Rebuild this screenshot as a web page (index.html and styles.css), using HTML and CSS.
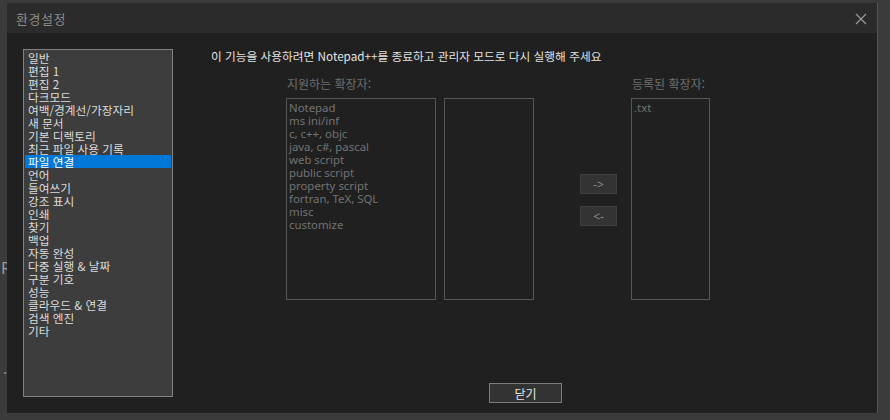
FILE: index.html
```html
<html lang="ko">
  <head>
    <meta charset="UTF-8" />
    <meta name="viewport" content="width=device-width, initial-scale=1.0" />
    <title>환경설정</title>

    <link rel="stylesheet" href="styles.css">
  </head>
  <body>
    <div class="gutter">
      <span class="ghost-r">R</span>
      <span class="ghost-dot">.</span>
    </div>

    <div class="dialog">
      <div class="titlebar">
        <span class="title">환경설정</span>
        <svg class="close" width="12" height="12" viewBox="0 0 12 12">
          <path d="M1 1 L11 11 M11 1 L1 11" stroke="#9a9a9a" stroke-width="1.2" fill="none" />
        </svg>
      </div>

      <div class="content">
        <ul class="nav">
          <li>일반</li>
          <li>편집 1</li>
          <li>편집 2</li>
          <li>다크모드</li>
          <li>여백/경계선/가장자리</li>
          <li>새 문서</li>
          <li>기본 디렉토리</li>
          <li>최근 파일 사용 기록</li>
          <li class="selected">파일 연결</li>
          <li>언어</li>
          <li>들여쓰기</li>
          <li>강조 표시</li>
          <li>인쇄</li>
          <li>찾기</li>
          <li>백업</li>
          <li>자동 완성</li>
          <li>다중 실행 &amp; 날짜</li>
          <li>구분 기호</li>
          <li>성능</li>
          <li>클라우드 &amp; 연결</li>
          <li>검색 엔진</li>
          <li>기타</li>
        </ul>

        <div class="panel">
          <p class="notice">이 기능을 사용하려면 Notepad++를 종료하고 관리자 모드로 다시 실행해 주세요</p>

          <div class="columns">
            <div class="col col-ext">
              <div class="label">지원하는 확장자:</div>
              <ul class="box">
                <li>Notepad</li>
                <li>ms ini/inf</li>
                <li>c, c++, objc</li>
                <li>java, c#, pascal</li>
                <li>web script</li>
                <li>public script</li>
                <li>property script</li>
                <li>fortran, TeX, SQL</li>
                <li>misc</li>
                <li>customize</li>
              </ul>
            </div>

            <div class="col col-sub">
              <div class="label"></div>
              <ul class="box"></ul>
            </div>

            <div class="col col-btns">
              <div class="btn small">-&gt;</div>
              <div class="btn small">&lt;-</div>
            </div>

            <div class="col col-reg">
              <div class="label">등록된 확장자:</div>
              <ul class="box">
                <li>.txt</li>
              </ul>
            </div>
          </div>

          <div class="btn close-btn">닫기</div>
        </div>
      </div>
    </div>
  </body>
</html>
```

FILE: styles.css
```css
*,
*::after,
*::before {
  margin: 0;
  padding: 0;
  box-sizing: border-box;
}

:root {
  --outer-bg: #3b3b3b;
  --title-bg: #2b2b2b;
  --dialog-bg: #202020;
  --list-bg: #3d3d3d;
  --text: #dcdcdc;
  --dim: #6e6e6e;

  --ui-font: "Noto Sans CJK KR", "Noto Sans", sans-serif;
  --latin-font: "Noto Sans", "Noto Sans CJK KR", sans-serif;
}

body {
  width: 890px;
  height: 420px;
  overflow: hidden;
  display: flex;
  padding-top: 3px;
  background: var(--outer-bg);
  font-family: var(--ui-font);
  font-size: 12px;
  color: var(--text);
}

ul {
  list-style: none;
}

.gutter {
  width: 7px;
  display: flex;
  flex-direction: column;
  align-items: flex-end;
  overflow: hidden;
  color: #9a9a9a;
  font-family: var(--latin-font);
}

.ghost-r {
  font-size: 16px;
  line-height: 16px;
  margin-top: 257px;
  margin-right: -4px;
}

.ghost-dot {
  font-size: 14px;
  line-height: 10px;
  margin-top: 88px;
}

.dialog {
  width: 871px;
  height: 410px;
  display: flex;
  flex-direction: column;
  background: var(--dialog-bg);
  border-right: 1px solid #555;
}

.titlebar {
  height: 30px;
  flex: none;
  display: flex;
  align-items: center;
  justify-content: space-between;
  padding: 0 10px 0 9px;
  background: var(--title-bg);
}

.title {
  color: #8a8a8a;
  font-size: 13px;
  letter-spacing: 0.5px;
}

.close {
  margin-top: 1px;
}

.content {
  flex: 1;
  display: flex;
  padding: 16px 0 0 16px;
}

.nav {
  width: 150px;
  height: 348px;
  flex: none;
  padding: 1px;
  background: var(--list-bg);
  border: 1px solid #828282;
  font-size: 11.7px;
}

.nav li {
  height: 13px;
  line-height: 13px;
  padding-left: 3px;
  white-space: nowrap;
}

.nav li.selected {
  background: #0078d7;
  color: #fff;
}

.panel {
  margin-left: 38px;
  display: flex;
  flex-direction: column;
}

.notice {
  line-height: 13px;
  font-size: 11.7px;
  color: #e2e2e2;
}

.columns {
  display: flex;
  align-items: flex-start;
  margin-top: 15px;
  margin-left: 75px;
}

.col {
  display: flex;
  flex-direction: column;
}

.label {
  height: 14px;
  line-height: 14px;
  color: var(--dim);
  padding-left: 1px;
}

.box {
  height: 202px;
  margin-top: 7px;
  padding: 2px;
  border: 1px solid #565656;
  font-family: var(--latin-font);
  font-size: 11.4px;
  color: #737373;
}

.box li {
  height: 13px;
  line-height: 13px;
  white-space: nowrap;
}

.col-ext {
  width: 150px;
}

.col-sub {
  width: 90px;
  margin-left: 8px;
}

.col-btns {
  width: 37px;
  margin-left: 46px;
  margin-top: 97px;
  gap: 12px;
}

.col-reg {
  width: 79px;
  margin-left: 14px;
}

.btn {
  display: flex;
  justify-content: center;
  align-items: center;
  height: 20px;
  background: #333;
  cursor: pointer;
}

.btn.small {
  border: 1px solid #3e3e3e;
  color: #8a8a8a;
  font-family: var(--latin-font);
  font-size: 12px;
}

.close-btn {
  width: 73px;
  margin-top: 83px;
  margin-left: 278px;
  border: 1px solid #7c7c7c;
  color: #e6e6e6;
}
```
